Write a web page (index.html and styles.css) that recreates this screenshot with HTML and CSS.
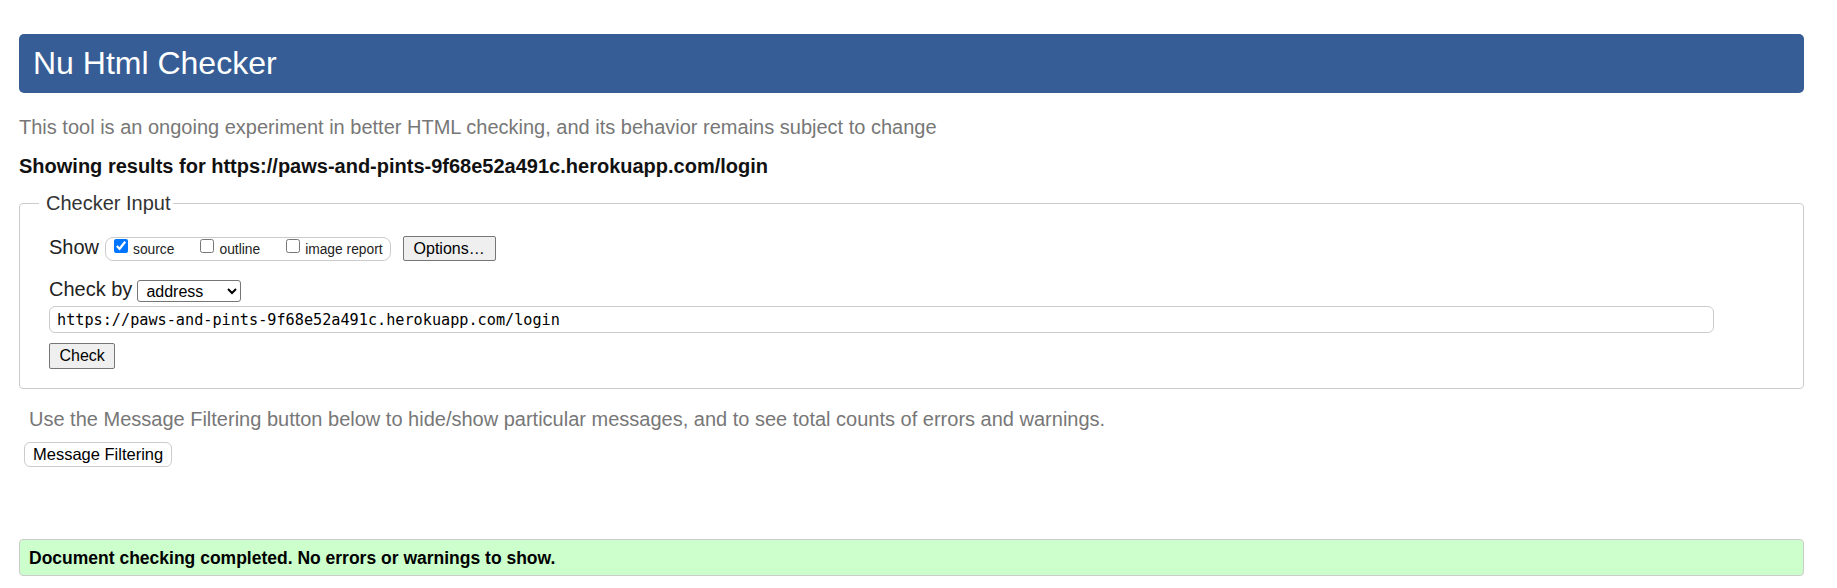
FILE: index.html
```html
<!DOCTYPE html>
<html lang="en">
<head>
<meta charset="utf-8">
<title>Showing results for https://paws-and-pints-9f68e52a491c.herokuapp.com/login - Nu Html Checker</title>
<link rel="stylesheet" href="styles.css">
</head>
<body>
<div class="page">
  <h1 class="title">Nu Html Checker</h1>
  <p class="intro">This tool is an ongoing experiment in better HTML checking, and its behavior remains subject to change</p>
  <p class="results-for">Showing results for https://paws-and-pints-9f68e52a491c.herokuapp.com/login</p>

  <form class="checker">
    <fieldset class="checker-input">
      <legend class="legend">Checker Input</legend>
      <div class="row row-show">
        <span class="row-label">Show</span>
        <div class="show-box">
          <label class="opt"><input type="checkbox" class="cb" checked><span class="opt-text">source</span></label>
          <label class="opt"><input type="checkbox" class="cb"><span class="opt-text">outline</span></label>
          <label class="opt"><input type="checkbox" class="cb"><span class="opt-text">image report</span></label>
        </div>
        <button type="button" class="btn btn-options">Options…</button>
      </div>
      <div class="row row-by">
        <span class="row-label">Check by</span>
        <select class="by-select">
          <option>address</option>
          <option>file upload</option>
          <option>text input</option>
        </select>
      </div>
      <input type="text" class="url-input" value="https://paws-and-pints-9f68e52a491c.herokuapp.com/login">
      <button type="button" class="btn btn-check">Check</button>
    </fieldset>
  </form>

  <p class="filter-note">Use the Message Filtering button below to hide/show particular messages, and to see total counts of errors and warnings.</p>
  <button type="button" class="btn-filter">Message Filtering</button>

  <p class="success">Document checking completed. No errors or warnings to show.</p>
</div>
</body>
</html>
```

FILE: styles.css
```css
html, body {
  margin: 0;
  padding: 0;
  background: #fff;
}

body {
  font-family: "Liberation Sans", Arial, sans-serif;
  color: #222;
}

.page {
  padding: 34px 33px 0 19px;
}

.title {
  margin: 0;
  padding: 11px 14px;
  font-size: 32px;
  line-height: 37px;
  font-weight: normal;
  color: #fff;
  background: #365d95;
  border-radius: 5px;
}

.intro {
  margin: 23px 0 0;
  font-size: 20px;
  line-height: 23px;
  color: #777;
}

.results-for {
  margin: 16px 0 0;
  font-size: 20px;
  line-height: 23px;
  font-weight: bold;
  color: #111;
}

.checker {
  margin: 0;
}

.checker-input {
  margin: 14px 0 0;
  padding: 21px 29px 19px 29px;
  border: 1px solid #ccc;
  border-radius: 4px;
  min-width: 0;
}

.legend {
  margin-left: -10px;
  padding: 0 2px 0 7px;
  font-size: 20px;
  line-height: 23px;
  color: #333;
}

.row {
  display: flex;
  align-items: flex-start;
}

.row-by {
  margin-top: 17px;
}

.row-label {
  font-size: 20px;
  line-height: 23px;
  color: #222;
}

.show-box {
  display: flex;
  align-items: flex-start;
  box-sizing: border-box;
  height: 24px;
  margin: 1px 0 0 6px;
  padding: 0 7px 0 8px;
  border: 1px solid #ccc;
  border-radius: 8px;
}

.opt {
  display: flex;
  align-items: flex-start;
}

.opt + .opt {
  margin-left: 26px;
}

.cb {
  width: 14px;
  height: 14px;
  margin: 1px 5px 0 0;
}

.opt-text {
  margin-top: 3.5px;
  font-size: 13.8px;
  line-height: 16px;
  color: #222;
}

.btn {
  box-sizing: border-box;
  height: 25px;
  padding: 0 9.5px;
  font-family: "Liberation Sans", Arial, sans-serif;
  font-size: 16px;
  color: #000;
  background: #efefef;
  border: 1px solid #767676;
  border-radius: 2px;
}

.btn-options {
  margin-left: 12px;
  padding: 0 10px;
}

.by-select {
  box-sizing: border-box;
  width: 104px;
  height: 22px;
  margin: 2px 0 0 5px;
  padding: 0 0 0 4px;
  font-family: "Liberation Sans", Arial, sans-serif;
  font-size: 16px;
  color: #000;
  background-color: #fff;
  border: 1px solid #767676;
  border-radius: 3px;
}

.url-input {
  display: block;
  box-sizing: border-box;
  width: 96.5%;
  height: 27px;
  margin: 4px 0 0;
  padding: 0 7px;
  font-family: "DejaVu Sans Mono", "Liberation Mono", monospace;
  font-size: 15.2px;
  color: #000;
  border: 1px solid #ccc;
  border-radius: 6px;
}

.btn-check {
  display: block;
  height: 26px;
  margin-top: 10px;
}

.filter-note {
  margin: 19px 0 0;
  padding-left: 10px;
  font-size: 20px;
  line-height: 23px;
  color: #777;
}

.btn-filter {
  display: block;
  box-sizing: border-box;
  height: 25px;
  margin: 11px 0 0 5px;
  padding: 0 8px;
  font-family: "Liberation Sans", Arial, sans-serif;
  font-size: 16.5px;
  color: #000;
  background: #fff;
  border: 1px solid #ccc;
  border-radius: 6px;
}

.success {
  margin: 72px 0 0;
  padding: 7.5px 9px;
  font-size: 17.5px;
  line-height: 20px;
  font-weight: bold;
  color: #000;
  background: #ccffcc;
  border: 1px solid #ccc;
  border-radius: 4px;
}
```
